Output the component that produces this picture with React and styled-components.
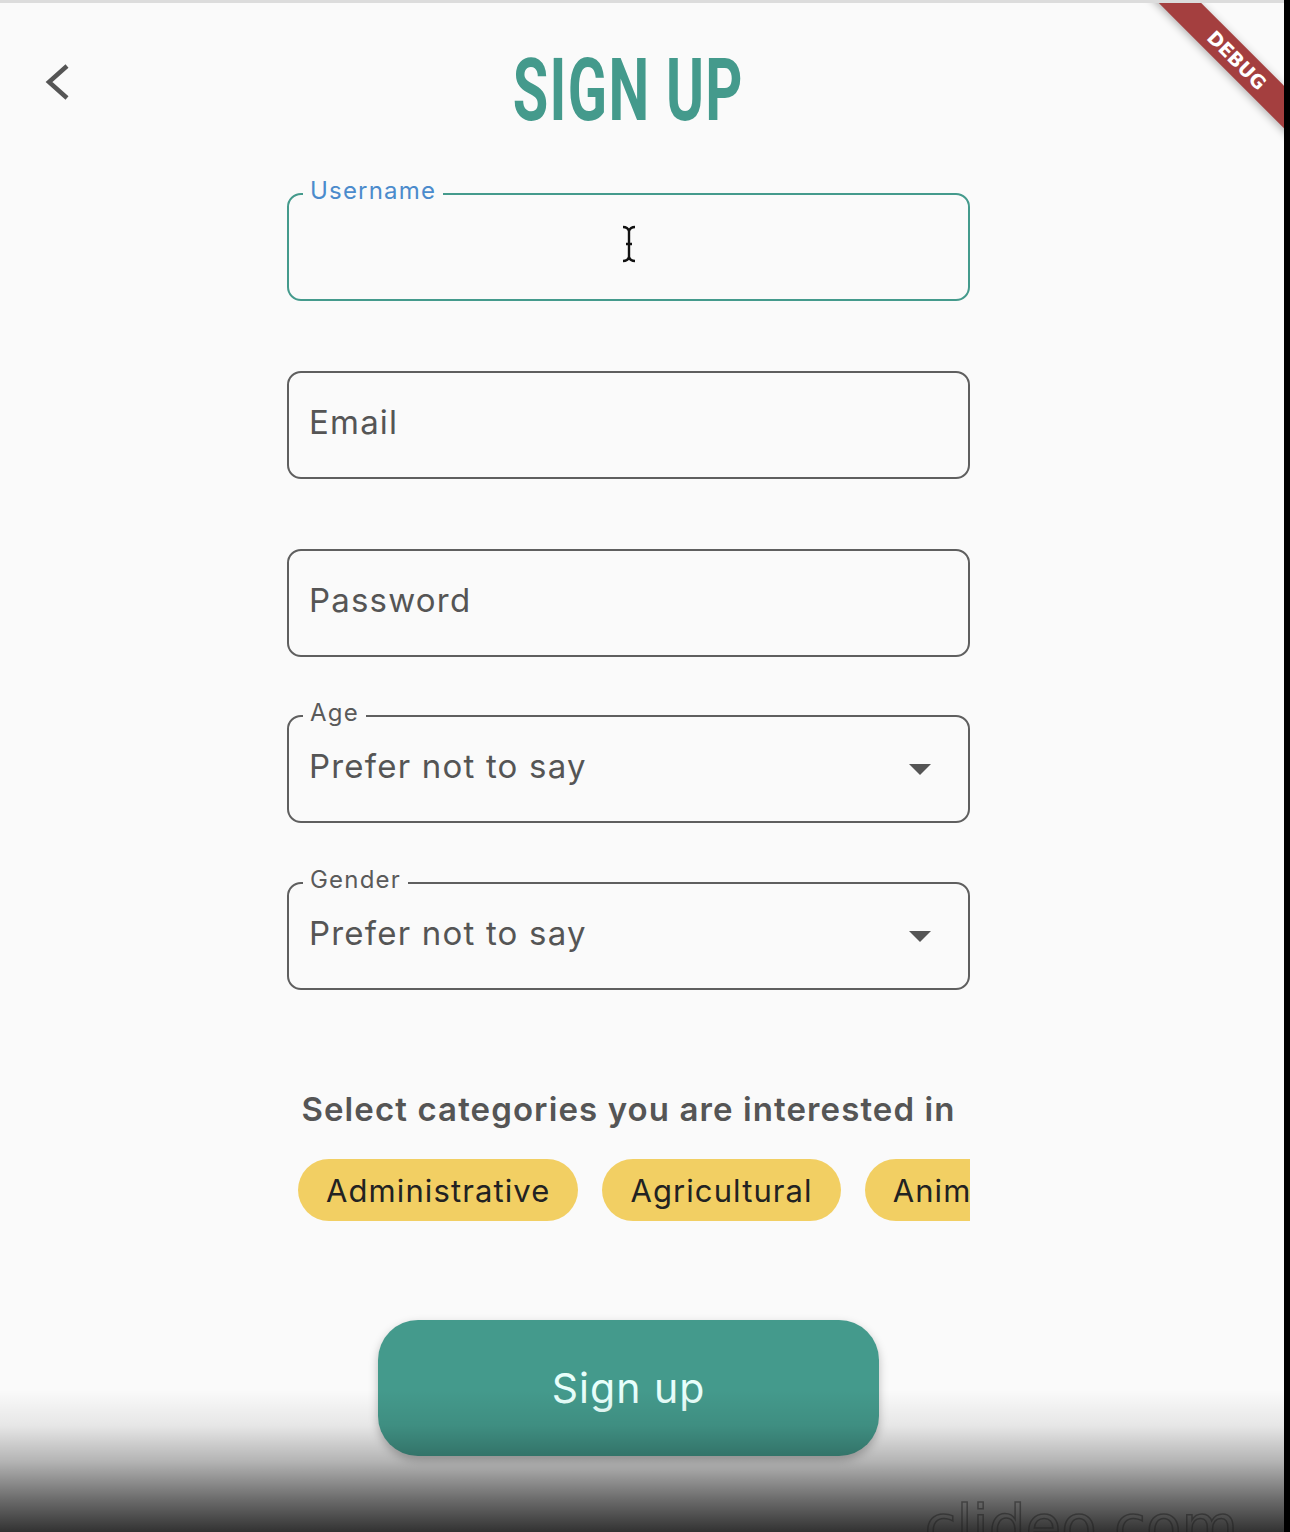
import React from 'react';
import styled, { createGlobalStyle } from 'styled-components';

const GlobalStyle = createGlobalStyle`
  body {
    margin: 0;
    background: #000000;
    font-family: Inter, 'Open Sans', sans-serif;
  }
`;

const teal = '#449a8c';

const Screen = styled.div`
  position: relative;
  width: 1284px;
  height: 1532px;
  box-sizing: border-box;
  overflow: hidden;
  background: #fafafa;
  border-top: 3px solid #dcdcdc;
`;

const Main = styled.main`
  width: 1257px;
  display: flex;
  flex-direction: column;
  align-items: center;
`;

const Header = styled.header`
  width: 100%;
  box-sizing: border-box;
  padding-top: 43px;
  display: grid;
  grid-template-columns: 1fr auto 1fr;
  align-items: center;
`;

const BackButton = styled.button`
  justify-self: start;
  margin-left: 44px;
  margin-bottom: 14px;
  padding: 0;
  border: 0;
  background: none;
  display: flex;
`;

const Title = styled.h1`
  margin: 0;
  font-family: Roboto, 'Liberation Sans', sans-serif;
  font-weight: 700;
  font-size: 88px;
  line-height: 88px;
  color: ${teal};
  transform: scaleX(0.655);
  letter-spacing: 2px;
`;

const Form = styled.form`
  width: 683px;
  margin-top: 59px;
  display: flex;
  flex-direction: column;
`;

const Field = styled.div`
  position: relative;
  height: 108px;
  box-sizing: border-box;
  margin-top: ${(p) => p.$gap || 0}px;
  padding: 0 ${(p) => (p.$focused ? 20 : 37)}px 6px 20px;
  border: 2px solid ${(p) => (p.$focused ? teal : '#5f5f5f')};
  border-radius: 14px;
  display: flex;
  align-items: center;
  justify-content: ${(p) => (p.$focused ? 'center' : 'space-between')};
`;

const FloatLabel = styled.span`
  position: absolute;
  top: -18px;
  left: 14px;
  padding: 0 7px;
  background: #fafafa;
  font-size: 24px;
  line-height: 28px;
  letter-spacing: 1.2px;
  color: ${(p) => (p.$focused ? '#4b8bcc' : '#5a5a5a')};
`;

const Value = styled.span`
  font-size: 33px;
  letter-spacing: 1.2px;
  color: #555555;
`;

const Caret = styled.span`
  margin-top: 6px;
  width: 0;
  height: 0;
  border-left: 11px solid transparent;
  border-right: 11px solid transparent;
  border-top: 11px solid #555555;
`;

const Categories = styled.section`
  width: 683px;
  margin-top: 99px;
  display: flex;
  flex-direction: column;
  align-items: center;
`;

const CategoriesTitle = styled.h2`
  margin: 0;
  font-size: 33px;
  font-weight: 600;
  letter-spacing: 1.1px;
  color: #555555;
`;

const ChipRow = styled.div`
  width: 100%;
  box-sizing: border-box;
  margin-top: 30px;
  padding-left: 11px;
  display: flex;
  gap: 24px;
  overflow: hidden;
`;

const Chip = styled.span`
  flex: none;
  height: 62px;
  padding: 0 28px;
  border-radius: 31px;
  background: #f2cf63;
  display: flex;
  align-items: center;
  font-size: 31px;
  letter-spacing: 1.1px;
  color: #222222;
`;

const SubmitButton = styled.button`
  width: 501px;
  height: 136px;
  margin-top: 99px;
  border: 0;
  border-radius: 40px;
  background: ${teal};
  box-shadow: 0 4px 10px rgba(0, 0, 0, 0.25);
  font-family: Inter, 'Open Sans', sans-serif;
  font-size: 41px;
  letter-spacing: 1px;
  color: #e8fffb;
`;

const DebugBanner = styled.div`
  position: absolute;
  top: 42px;
  left: 1087px;
  width: 300px;
  height: 30px;
  transform: rotate(45deg);
  background: #a43f3f;
  box-shadow: 0 2px 8px rgba(0, 0, 0, 0.3);
  display: flex;
  align-items: center;
  justify-content: center;
  font-family: 'DejaVu Sans', sans-serif;
  font-weight: 700;
  font-size: 19px;
  color: #ffffff;
`;

const BottomFade = styled.div`
  position: absolute;
  left: 0;
  right: 0;
  bottom: 0;
  height: 142px;
  pointer-events: none;
  background: linear-gradient(
    to bottom,
    rgba(0, 0, 0, 0) 0%,
    rgba(0, 0, 0, 0.08) 25%,
    rgba(0, 0, 0, 0.28) 50%,
    rgba(0, 0, 0, 0.58) 78%,
    rgba(0, 0, 0, 0.8) 100%
  );
`;

const Watermark = styled.span`
  position: absolute;
  top: 1495px;
  right: 46px;
  font-family: 'DejaVu Sans', sans-serif;
  font-size: 58px;
  line-height: 1;
  color: transparent;
  -webkit-text-stroke: 1.5px rgba(30, 30, 30, 0.5);
`;

const fields = [
  { label: 'Username', focused: true, gap: 0 },
  { placeholder: 'Email', gap: 70 },
  { placeholder: 'Password', gap: 70 },
  { label: 'Age', value: 'Prefer not to say', gap: 58 },
  { label: 'Gender', value: 'Prefer not to say', gap: 59 },
];

const categories = ['Administrative', 'Agricultural', 'Animals', 'Arts'];

const ChevronLeft = () => (
  <svg width="26" height="40" viewBox="0 0 26 40">
    <polyline
      points="23,3 5,19 23,35"
      fill="none"
      stroke="#555555"
      strokeWidth="4.5"
    />
  </svg>
);

const TextCursor = () => (
  <svg width="18" height="38" viewBox="0 0 18 38">
    <path
      d="M3 2c3 0 5 1 6 4 1-3 3-4 6-4M9 6v26M3 36c3 0 5-1 6-4 1 3 3 4 6 4M6 19h6"
      fill="none"
      stroke="#111111"
      strokeWidth="2.4"
    />
  </svg>
);

const App = () => {
  return (
    <Screen>
      <GlobalStyle />
      <Main>
        <Header>
          <BackButton type="button" aria-label="Back">
            <ChevronLeft />
          </BackButton>
          <Title>SIGN UP</Title>
        </Header>

        <Form onSubmit={(e) => e.preventDefault()}>
          {fields.map((field) => (
            <Field
              key={field.label || field.placeholder}
              $gap={field.gap}
              $focused={field.focused}
            >
              {field.label && (
                <FloatLabel $focused={field.focused}>{field.label}</FloatLabel>
              )}
              {field.focused && <TextCursor />}
              {field.placeholder && <Value>{field.placeholder}</Value>}
              {field.value && (
                <>
                  <Value>{field.value}</Value>
                  <Caret />
                </>
              )}
            </Field>
          ))}
        </Form>

        <Categories>
          <CategoriesTitle>Select categories you are interested in</CategoriesTitle>
          <ChipRow>
            {categories.map((c) => (
              <Chip key={c}>{c}</Chip>
            ))}
          </ChipRow>
        </Categories>

        <SubmitButton type="button">Sign up</SubmitButton>
      </Main>

      <DebugBanner>DEBUG</DebugBanner>
      <BottomFade />
      <Watermark>clideo.com</Watermark>
    </Screen>
  );
};

export default App;
